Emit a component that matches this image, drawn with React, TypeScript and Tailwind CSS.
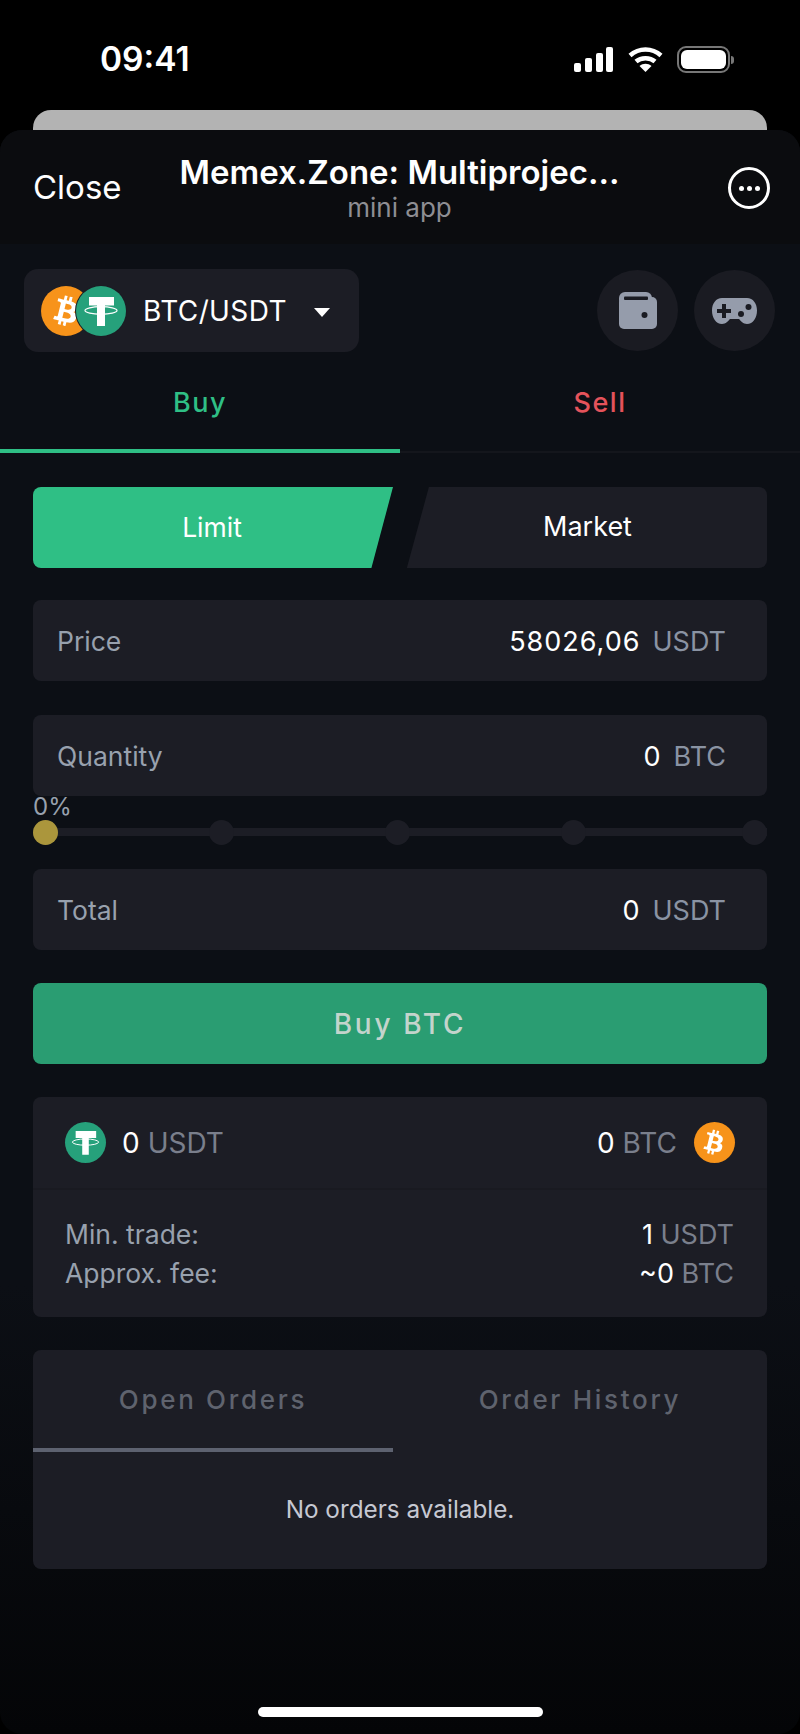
import React from 'react';
import { FaBtc } from 'react-icons/fa';

function BtcCoin({ size }: { size: number }) {
  return (
    <div
      className="flex shrink-0 items-center justify-center rounded-full bg-[#f7931a]"
      style={{ width: size, height: size }}
    >
      <FaBtc className="rotate-[14deg] text-white" style={{ width: size * 0.5, height: size * 0.6 }} />
    </div>
  );
}

function TetherCoin({ size, ring }: { size: number; ring?: boolean }) {
  return (
    <div
      className={`shrink-0 rounded-full bg-[#26a17b] ${ring ? 'relative -ml-[15px] ring-1 ring-[#1c1d25]' : ''}`}
      style={{ width: size, height: size }}
    >
      <svg viewBox="0 0 50 50" className="h-full w-full">
        <path d="M13 11h25v8.500h-9V40h-8V19.500h-8z" fill="#fff" />
        <ellipse cx="25" cy="24.500" rx="16" ry="3.800" fill="none" stroke="#fff" strokeWidth="1.200" />
      </svg>
    </div>
  );
}

function Field({ label, value, unit }: { label: string; value: string; unit: string }) {
  return (
    <div className="flex h-[81px] items-center justify-between rounded-lg bg-[#1c1d25] pl-[24px] pr-[41px] pt-[3px] text-[27px]">
      <span className="text-[26.500px] text-[#98a1ae]">{label}</span>
      <span className="flex items-center gap-[12px]">
        <span className="tracking-[1px] text-white">{value}</span>
        <span className="text-[#8a93a3]">{unit}</span>
      </span>
    </div>
  );
}

export default function App() {
  return (
    <div className="flex h-[1734px] w-[800px] flex-col overflow-hidden bg-black font-['Inter',sans-serif]">
      {/* Status bar */}
      <div className="flex h-[110px] shrink-0 items-start justify-between pl-[100px] pr-[66px] pt-[39px]">
        <span className="text-[33.500px] font-semibold leading-[40px] text-white">09:41</span>
        <div className="flex items-center gap-[15px] pt-[7px]">
          <svg width="39" height="25" viewBox="0 0 39 25" fill="#fff">
            <rect x="0" y="16" width="7" height="9" rx="2" />
            <rect x="11" y="11" width="7" height="14" rx="2" />
            <rect x="22" y="6" width="7" height="19" rx="2" />
            <rect x="32" y="0" width="7" height="25" rx="2" />
          </svg>
          <svg width="35" height="25" viewBox="0 0 35 25" fill="none" stroke="#fff" strokeWidth="4.500">
            <path d="M2 8.500C11 0.500 24 0.500 33 8.500" />
            <path d="M8 14.500C13 10 22 10 27 14.500" />
            <path d="M17.500 25l-6-6c3.500-3 8.500-3 12 0z" fill="#fff" stroke="none" />
          </svg>
          <div className="-ml-[1px] flex items-center">
            <div className="flex h-[27px] w-[53px] items-center justify-center rounded-[9px] border-2 border-[#777]">
              <div className="h-[19px] w-[45px] rounded-[6px] bg-white" />
            </div>
            <div className="ml-[1px] h-[8px] w-[3px] rounded-r bg-[#777]" />
          </div>
        </div>
      </div>

      {/* Sheet behind */}
      <div className="mx-[33px] h-[20px] shrink-0 rounded-t-[18px] bg-[#b3b3b3]" />

      <div className="flex min-h-0 flex-1 flex-col overflow-hidden rounded-[22px] bg-[linear-gradient(to_bottom,#0c0f15_0%,#0c0f15_72%,#040507_100%)]">
        {/* Mini app header */}
        <div className="flex h-[114px] shrink-0 items-center bg-[#0b0c0f] pl-[33px] pr-[30px]">
          <div className="flex-1 text-[33px] leading-none text-white">Close</div>
          <div className="mr-[4px] flex flex-col items-center">
            <span className="text-[33px] font-semibold leading-[42px] text-white">Memex.Zone: Multiprojec...</span>
            <span className="text-[26px] leading-[30px] text-[#8e8e93]">mini app</span>
          </div>
          <div className="flex flex-1 justify-end pt-[2px]">
            <div className="flex h-[42px] w-[42px] items-center justify-center gap-[3px] rounded-full border-[3px] border-white">
              <span className="h-[5px] w-[5px] rounded-full bg-white" />
              <span className="h-[5px] w-[5px] rounded-full bg-white" />
              <span className="h-[5px] w-[5px] rounded-full bg-white" />
            </div>
          </div>
        </div>

        {/* Pair selector and shortcuts */}
        <div className="flex items-center justify-between pl-[24px] pr-[25px] pt-[25px]">
          <div className="flex h-[83px] w-[335px] items-center rounded-[14px] bg-[#1c1d25] pl-[17px]">
            <BtcCoin size={50} />
            <TetherCoin size={50} ring />
            <span className="ml-[17px] text-[28px] tracking-[0.4px] text-white">BTC/USDT</span>
            <span className="ml-[27px] mt-[3px] h-0 w-0 border-x-[8px] border-t-[9px] border-x-transparent border-t-white" />
          </div>
          <div className="flex gap-[16px]">
            <div className="flex h-[81px] w-[81px] items-center justify-center rounded-full bg-[#1a1b22]">
              <svg width="38" height="37" viewBox="0 0 38 37" fill="#959cab">
                <rect x="0" y="0" width="33" height="14" rx="6" />
                <rect x="0" y="5" width="38" height="32" rx="5" />
                <rect x="5" y="4.500" width="24" height="3.500" rx="1" fill="#1a1b22" />
                <circle cx="25.500" cy="23" r="3" fill="#1a1b22" />
              </svg>
            </div>
            <div className="flex h-[81px] w-[81px] items-center justify-center rounded-full bg-[#1a1b22]">
              <svg width="45" height="26" viewBox="0 0 45 26" fill="#959cab">
                <path d="M10 0H35C41 0 45 5.500 45 12.500C45 20 41 26 35 26C31 26 29 23 27 21H18C16 23 14 26 10 26C4 26 0 20 0 12.500C0 5.500 4 0 10 0Z" />
                <path d="M10 6h4v5h5v4h-5v5h-4v-5H5v-4h5z" fill="#1a1b22" />
                <circle cx="29" cy="16" r="3" fill="#1a1b22" />
                <circle cx="36.500" cy="9" r="3" fill="#1a1b22" />
              </svg>
            </div>
          </div>
        </div>

        {/* Buy / Sell tabs */}
        <div className="mt-[12px] flex h-[89px] border-b-2 border-[#14161c] text-[27px] tracking-[1.5px]">
          <div className="-mb-[2px] flex w-1/2 items-center justify-center border-b-4 border-[#2fbf85] pb-[6px] font-medium text-[#2fbf85]">
            Buy
          </div>
          <div className="flex w-1/2 items-center justify-center pb-[8px] font-medium text-[#e5535b]">Sell</div>
        </div>

        <div className="flex flex-col px-[33px] pt-[34px]">
          {/* Order type */}
          <div className="flex h-[81px] text-[27px] text-white">
            <div className="flex w-[360px] items-center justify-center rounded-l-lg bg-[#2fbf85] pr-[2px] text-[26.500px] [clip-path:polygon(0_0,100%_0,94%_100%,0_100%)]">
              Limit
            </div>
            <div className="flex flex-1 items-center justify-center rounded-r-lg bg-[#1c1d25] pl-[15px] [clip-path:polygon(9.600%_0,100%_0,100%_100%,3.700%_100%)]">
              Market
            </div>
          </div>

          <div className="mt-[32px]">
            <Field label="Price" value="58026,06" unit="USDT" />
          </div>
          <div className="mt-[34px]">
            <Field label="Quantity" value="0" unit="BTC" />
          </div>

          {/* Percent slider */}
          <div className="h-[24px] text-[24px] leading-[22px] text-[#98a1ae]">0%</div>
          <div className="relative h-[25px]">
            <div className="absolute inset-x-0 top-[8px] h-[8px] bg-[#1c1d25]" />
            <div className="relative flex gap-[151px]">
              <span className="h-[25px] w-[25px] rounded-full bg-[#ab963c]" />
              <span className="h-[25px] w-[25px] rounded-full bg-[#1c1d25]" />
              <span className="h-[25px] w-[25px] rounded-full bg-[#1c1d25]" />
              <span className="h-[25px] w-[25px] rounded-full bg-[#1c1d25]" />
              <span className="ml-auto h-[25px] w-[25px] rounded-full bg-[#1c1d25]" />
            </div>
          </div>

          <div className="mt-[24px]">
            <Field label="Total" value="0" unit="USDT" />
          </div>

          <div className="mt-[33px] flex h-[81px] items-center justify-center rounded-lg bg-[#2a9d72] text-[28px] font-medium tracking-[2.700px] text-[#c3d4cc]">
            Buy BTC
          </div>

          {/* Balances */}
          <div className="mt-[33px] rounded-lg bg-[#1c1d25]">
            <div className="flex h-[93px] items-center justify-between border-b-2 border-[#191a21] pl-[32px] pr-[32px] text-[28px]">
              <div className="flex items-center">
                <TetherCoin size={41} />
                <span className="ml-[16px] text-white">0</span>
                <span className="ml-[8px] text-[#7a7f8c]">USDT</span>
              </div>
              <div className="flex items-center">
                <span className="text-white">0</span>
                <span className="ml-[8px] text-[#7a7f8c]">BTC</span>
                <span className="ml-[17px]">
                  <BtcCoin size={41} />
                </span>
              </div>
            </div>
            <div className="flex flex-col pb-[24px] pl-[32px] pr-[33px] pt-[25px] text-[27px] leading-[39px]">
              <div className="flex justify-between">
                <span className="text-[26.500px] text-[#98a1ae]">Min. trade:</span>
                <span className="text-white">
                  1 <span className="text-[#7a7f8c]">USDT</span>
                </span>
              </div>
              <div className="flex justify-between">
                <span className="text-[26.500px] text-[#98a1ae]">Approx. fee:</span>
                <span className="text-white">
                  ~0 <span className="text-[#7a7f8c]">BTC</span>
                </span>
              </div>
            </div>
          </div>

          {/* Orders */}
          <div className="mt-[33px] h-[219px] rounded-lg bg-[#1c1d25]">
            <div className="flex h-[102px] text-[26px] font-medium tracking-[2.700px] text-[#5f636e]">
              <div className="flex w-[360px] items-center justify-center border-b-4 border-[#5d6270]">Open Orders</div>
              <div className="flex flex-1 items-center justify-center pb-[4px]">Order History</div>
            </div>
            <div className="flex h-[117px] items-center justify-center pb-[2px] text-[24.300px] text-[#c6c8d2]">
              No orders available.
            </div>
          </div>
        </div>

        {/* Home indicator */}
        <div className="mt-auto flex justify-center pb-[17px]">
          <div className="h-[10px] w-[285px] rounded-full bg-white" />
        </div>
      </div>
    </div>
  );
}
